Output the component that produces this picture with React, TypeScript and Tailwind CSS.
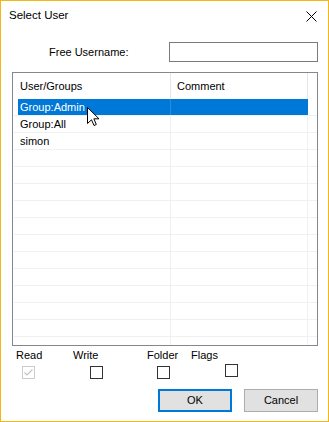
import React from "react";

const rows = ["Group:Admin", "Group:All", "simon", "", "", "", "", "", "", "", "", "", "", "", "", ""];

function Row({ text, selected }: { text: string; selected?: boolean }) {
  return (
    <div className="flex h-[17px] w-[303px] ml-px shrink-0 border-b border-[#f0f0f0]">
      <div className="w-[4px]" />
      <div
        className={
          selected
            ? "w-[152px] pl-[2px] flex items-center bg-[#0078d7] text-white"
            : "w-[152px] pl-[2px] flex items-center"
        }
      >
        {text}
      </div>
      <div className={selected ? "w-px bg-[#2a8cdc]" : "w-px bg-[#f0f0f0]"} />
      <div className={selected ? "w-[136px] bg-[#0078d7]" : "w-[136px]"} />
      <div className={selected ? "w-px bg-[#0078d7]" : "w-px bg-[#f0f0f0]"} />
      <div className="flex-1" />
    </div>
  );
}

function Check({ disabled, checked, className }: { disabled?: boolean; checked?: boolean; className?: string }) {
  return (
    <div
      className={
        "w-[13px] h-[13px] bg-white flex items-center justify-center " +
        (disabled ? "border border-[#cccccc] " : "border border-[#333333] ") +
        (className ?? "")
      }
    >
      {checked && (
        <svg width="9" height="7" viewBox="0 0 9 7">
          <path d="M0.5 3.5 L3 6 L8.5 0.5" fill="none" stroke={disabled ? "#c4c4c4" : "#333"} strokeWidth="1.2" />
        </svg>
      )}
    </div>
  );
}

export default function App() {
  return (
    <div className="relative w-[329px] h-[422px] border border-[#f4b612] bg-white text-black text-[11px] font-['Liberation_Sans',Arial,sans-serif] flex flex-col overflow-hidden">
      <div className="h-[30px] flex items-center justify-between pl-[8px] pr-[11px] shrink-0">
        <span className="text-[11.5px]">Select User</span>
        <svg width="11" height="11" viewBox="0 0 11 11">
          <path d="M0.5 0.5 L10.5 10.5 M10.5 0.5 L0.5 10.5" stroke="#000" strokeWidth="1" />
        </svg>
      </div>

      <div className="mt-[11px] h-[20px] flex items-center shrink-0">
        <span className="ml-[48px]">Free Username:</span>
        <div className="ml-auto mr-[10px] w-[149px] h-[20px] border border-[#7a7a7a] bg-white" />
      </div>

      <div className="mt-[10px] ml-[11px] w-[306px] h-[274px] border border-[#828790] flex flex-col shrink-0">
        <div className="h-[26px] flex shrink-0">
          <div className="w-[157px] pl-[7px] flex items-center">User/Groups</div>
          <div className="w-px bg-[#e5e5e5]" />
          <div className="w-[136px] pl-[6px] flex items-center">Comment</div>
          <div className="w-px bg-[#e5e5e5]" />
          <div className="flex-1" />
        </div>
        <div className="flex-1 overflow-hidden flex flex-col">
          {rows.map((r, i) => (
            <Row key={i} text={r} selected={i === 0} />
          ))}
        </div>
      </div>

      <div className="mt-[3px] h-[13px] leading-[13px] flex shrink-0">
        <span className="ml-[15px] w-[57px]">Read</span>
        <span className="w-[74px]">Write</span>
        <span className="w-[44px]">Folder</span>
        <span>Flags</span>
      </div>

      <div className="mt-[2px] h-[15px] flex items-start shrink-0">
        <Check disabled checked className="ml-[21px] mt-[2px]" />
        <Check className="ml-[55px] mt-[2px]" />
        <Check className="ml-[54px] mt-[2px]" />
        <Check className="ml-[55px]" />
      </div>

      <div className="mt-[10px] flex justify-end gap-[12px] pr-[10px] shrink-0">
        <button className="w-[74px] h-[23px] border-2 border-[#0078d7] bg-[#e1e1e1] flex items-center justify-center text-[11px]">
          OK
        </button>
        <button className="w-[74px] h-[23px] border border-[#adadad] bg-[#e1e1e1] flex items-center justify-center text-[11px]">
          Cancel
        </button>
      </div>

      <svg
        className="absolute left-[86px] top-[106px]"
        width="13"
        height="20"
        viewBox="0 0 13 20"
      >
        <path
          d="M0.5 0.5 L0.5 16.5 L4.5 12.8 L7 18.5 L9.3 17.5 L6.9 11.8 L12 11.8 Z"
          fill="#fff"
          stroke="#000"
          strokeWidth="1"
          strokeLinejoin="miter"
        />
      </svg>
    </div>
  );
}
